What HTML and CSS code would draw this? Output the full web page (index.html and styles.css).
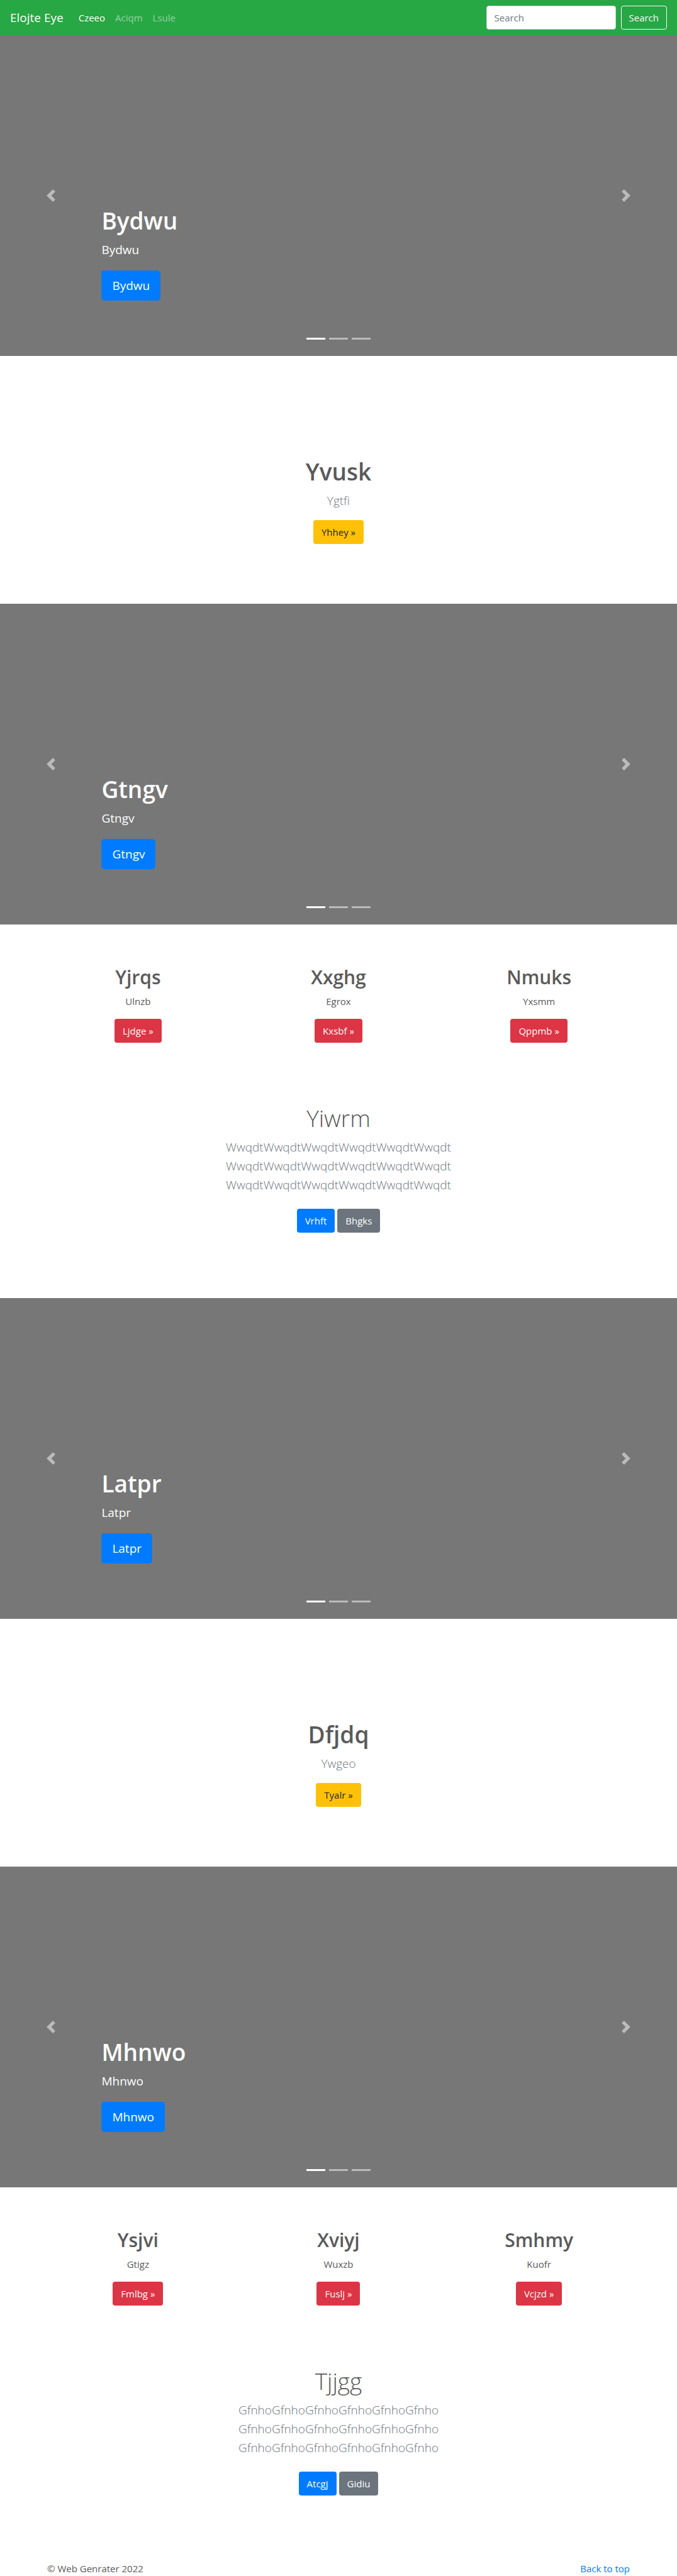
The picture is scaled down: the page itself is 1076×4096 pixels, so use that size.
FILE: index.html
```html
<!DOCTYPE html>
<html lang="en">
<head>
<meta charset="utf-8">
<meta name="viewport" content="width=device-width, initial-scale=1">
<title>Elojte Eye</title>
<link rel="stylesheet" href="styles.css">
</head>
<body>
<header class="navbar" id="top">
  <a class="brand" href="#">Elojte Eye</a>
  <nav class="nav-links">
    <a class="nav-link active" href="#">Czeeo</a>
    <a class="nav-link" href="#">Aciqm</a>
    <a class="nav-link" href="#">Lsule</a>
  </nav>
  <form class="search">
    <input class="search-input" type="search" placeholder="Search" aria-label="Search">
    <button class="btn btn-outline" type="button">Search</button>
  </form>
</header>

<main>
  <section class="carousel">
    <button class="arrow" type="button" aria-label="Previous"><svg viewBox="0 0 8 8"><path d="M5.25 0l-4 4 4 4 1.5-1.5-2.5-2.5 2.5-2.5-1.5-1.5z"/></svg></button>
    <div class="caption">
      <h1 class="title">Bydwu</h1>
      <p class="caption-text">Bydwu</p>
      <button class="btn btn-large btn-primary" type="button">Bydwu</button>
    </div>
    <button class="arrow" type="button" aria-label="Next"><svg viewBox="0 0 8 8"><path d="M2.75 0l-1.5 1.5 2.5 2.5-2.5 2.5 1.5 1.5 4-4-4-4z"/></svg></button>
    <div class="indicators"><span class="bar current"></span><span class="bar"></span><span class="bar"></span></div>
  </section>

  <section class="feature">
    <h1 class="title">Yvusk</h1>
    <p class="lead">Ygtfi</p>
    <button class="btn btn-warning" type="button">Yhhey »</button>
  </section>

  <section class="carousel">
    <button class="arrow" type="button" aria-label="Previous"><svg viewBox="0 0 8 8"><path d="M5.25 0l-4 4 4 4 1.5-1.5-2.5-2.5 2.5-2.5-1.5-1.5z"/></svg></button>
    <div class="caption">
      <h1 class="title">Gtngv</h1>
      <p class="caption-text">Gtngv</p>
      <button class="btn btn-large btn-primary" type="button">Gtngv</button>
    </div>
    <button class="arrow" type="button" aria-label="Next"><svg viewBox="0 0 8 8"><path d="M2.75 0l-1.5 1.5 2.5 2.5-2.5 2.5 1.5 1.5 4-4-4-4z"/></svg></button>
    <div class="indicators"><span class="bar current"></span><span class="bar"></span><span class="bar"></span></div>
  </section>

  <section class="marketing">
    <div class="container columns">
      <div class="column">
        <h2 class="subtitle">Yjrqs</h2>
        <p class="text">Ulnzb</p>
        <button class="btn btn-danger" type="button">Ljdge »</button>
      </div>
      <div class="column">
        <h2 class="subtitle">Xxghg</h2>
        <p class="text">Egrox</p>
        <button class="btn btn-danger" type="button">Kxsbf »</button>
      </div>
      <div class="column">
        <h2 class="subtitle">Nmuks</h2>
        <p class="text">Yxsmm</p>
        <button class="btn btn-danger" type="button">Qppmb »</button>
      </div>
    </div>
    <div class="intro">
      <h1 class="title title-light">Yiwrm</h1>
      <p class="lead">WwqdtWwqdtWwqdtWwqdtWwqdtWwqdt<br>WwqdtWwqdtWwqdtWwqdtWwqdtWwqdt<br>WwqdtWwqdtWwqdtWwqdtWwqdtWwqdt</p>
      <div class="actions">
        <button class="btn btn-primary" type="button">Vrhft</button>
        <button class="btn btn-secondary" type="button">Bhgks</button>
      </div>
    </div>
  </section>

  <section class="carousel">
    <button class="arrow" type="button" aria-label="Previous"><svg viewBox="0 0 8 8"><path d="M5.25 0l-4 4 4 4 1.5-1.5-2.5-2.5 2.5-2.5-1.5-1.5z"/></svg></button>
    <div class="caption">
      <h1 class="title">Latpr</h1>
      <p class="caption-text">Latpr</p>
      <button class="btn btn-large btn-primary" type="button">Latpr</button>
    </div>
    <button class="arrow" type="button" aria-label="Next"><svg viewBox="0 0 8 8"><path d="M2.75 0l-1.5 1.5 2.5 2.5-2.5 2.5 1.5 1.5 4-4-4-4z"/></svg></button>
    <div class="indicators"><span class="bar current"></span><span class="bar"></span><span class="bar"></span></div>
  </section>

  <section class="feature">
    <h1 class="title">Dfjdq</h1>
    <p class="lead">Ywgeo</p>
    <button class="btn btn-warning" type="button">Tyalr »</button>
  </section>

  <section class="carousel">
    <button class="arrow" type="button" aria-label="Previous"><svg viewBox="0 0 8 8"><path d="M5.25 0l-4 4 4 4 1.5-1.5-2.5-2.5 2.5-2.5-1.5-1.5z"/></svg></button>
    <div class="caption">
      <h1 class="title">Mhnwo</h1>
      <p class="caption-text">Mhnwo</p>
      <button class="btn btn-large btn-primary" type="button">Mhnwo</button>
    </div>
    <button class="arrow" type="button" aria-label="Next"><svg viewBox="0 0 8 8"><path d="M2.75 0l-1.5 1.5 2.5 2.5-2.5 2.5 1.5 1.5 4-4-4-4z"/></svg></button>
    <div class="indicators"><span class="bar current"></span><span class="bar"></span><span class="bar"></span></div>
  </section>

  <section class="marketing">
    <div class="container columns">
      <div class="column">
        <h2 class="subtitle">Ysjvi</h2>
        <p class="text">Gtigz</p>
        <button class="btn btn-danger" type="button">Fmlbg »</button>
      </div>
      <div class="column">
        <h2 class="subtitle">Xviyj</h2>
        <p class="text">Wuxzb</p>
        <button class="btn btn-danger" type="button">Fuslj »</button>
      </div>
      <div class="column">
        <h2 class="subtitle">Smhmy</h2>
        <p class="text">Kuofr</p>
        <button class="btn btn-danger" type="button">Vcjzd »</button>
      </div>
    </div>
    <div class="intro">
      <h1 class="title title-light">Tjjgg</h1>
      <p class="lead">GfnhoGfnhoGfnhoGfnhoGfnhoGfnho<br>GfnhoGfnhoGfnhoGfnhoGfnhoGfnho<br>GfnhoGfnhoGfnhoGfnhoGfnhoGfnho</p>
      <div class="actions">
        <button class="btn btn-primary" type="button">Atcgj</button>
        <button class="btn btn-secondary" type="button">Gidiu</button>
      </div>
    </div>
  </section>
</main>

<footer class="container footer">
  <span>© Web Genrater 2022</span>
  <a class="top-link" href="#top">Back to top</a>
</footer>
</body>
</html>
```
FILE: styles.css
```css
* { box-sizing: border-box; }

body {
  margin: 0;
  background: #fff;
  color: #5a5a5a;
  font: 400 15px/24px "Open Sans", "Noto Sans", sans-serif;
}

h1, h2, p { margin: 0; }
a { text-decoration: none; }

.navbar {
  display: flex;
  align-items: center;
  min-height: 56px;
  padding: 8px 16px;
  background: #28a745;
}
.brand {
  margin-right: 16px;
  color: #fff;
  font-size: 19px;
  line-height: 30px;
}
.nav-links { display: flex; flex: 1; }
.nav-link { padding: 8px; color: rgba(255, 255, 255, .5); }
.nav-link.active { color: #fff; }
.search { display: flex; gap: 8px; }
.search-input {
  width: 206px;
  height: 38px;
  padding: 6px 12px;
  border: 1px solid #ced4da;
  border-radius: 4px;
  background: #fff;
  color: #495057;
  font: inherit;
}
.search-input::placeholder { color: #6c757d; opacity: 1; }

.btn {
  padding: 6px 12px;
  border: 1px solid transparent;
  border-radius: 4px;
  color: #fff;
  font: inherit;
  cursor: pointer;
}
.btn-outline { background: transparent; border-color: #f8f9fa; color: #f8f9fa; }
.btn-primary { background: #007bff; }
.btn-secondary { background: #6c757d; }
.btn-danger { background: #dc3545; }
.btn-warning { background: #ffc107; color: #212529; }
.btn-large {
  padding: 8px 16px;
  border-radius: 5px;
  font-size: 19px;
  line-height: 30px;
}

.title {
  margin-bottom: 6px;
  font-size: 37px;
  font-weight: 600;
  line-height: 50px;
}
.title-light { font-weight: 300; }
.subtitle {
  margin-bottom: 6px;
  font-size: 30px;
  font-weight: 600;
  line-height: 40px;
}
.text { margin-bottom: 16px; }
.lead {
  margin-bottom: 16px;
  color: #6c757d;
  font-size: 19px;
  font-weight: 300;
  line-height: 30px;
}

.carousel {
  position: relative;
  display: grid;
  grid-template-columns: 15% 1fr 15%;
  min-height: 510px;
  background: #777;
  color: #fff;
}
.caption { align-self: end; padding-bottom: 88px; }
.caption-text { margin-bottom: 18px; font-size: 19px; line-height: 30px; }
.arrow {
  display: flex;
  align-items: center;
  justify-content: center;
  padding: 0;
  border: 0;
  background: none;
  opacity: .5;
  cursor: pointer;
}
.arrow svg { width: 20px; height: 20px; fill: #fff; }
.indicators {
  position: absolute;
  right: 0;
  bottom: 26px;
  left: 0;
  display: flex;
  justify-content: center;
  gap: 6px;
}
.bar { width: 30px; height: 3px; background: #fff; opacity: .5; }
.bar.current { opacity: 1; }

.feature { padding: 159px 16px 95px; text-align: center; }

.container { max-width: 956px; margin: 0 auto; }
.marketing { padding: 64px 0 104px; text-align: center; }
.columns { display: grid; grid-template-columns: repeat(3, 1fr); }
.intro { padding-top: 95px; }
.intro .lead { margin-bottom: 23px; }
.actions { display: flex; justify-content: center; gap: 4px; }

.footer { display: flex; justify-content: space-between; padding: 0 15px; }
.top-link { color: #007bff; }
```
